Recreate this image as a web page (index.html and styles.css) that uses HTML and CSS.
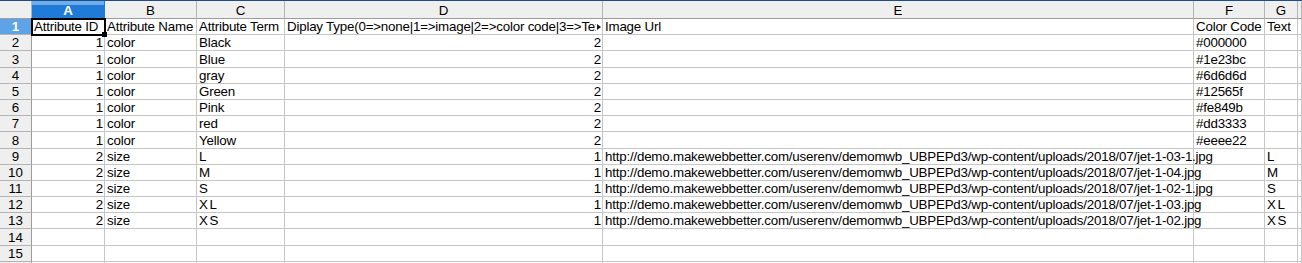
FILE: index.html
```html
<!DOCTYPE html>
<html lang="en">

<head>
    <meta charset="UTF-8">
    <meta name="viewport" content="width=device-width, initial-scale=1.0">
    <title>attributes.csv</title>
    <link rel="stylesheet" href="styles.css">
</head>

<body>

    <div class="sheet">
        <!-- column headers -->
        <div class="hd corner"></div>
        <div class="hd sel">A</div>
        <div class="hd">B</div>
        <div class="hd">C</div>
        <div class="hd">D</div>
        <div class="hd">E</div>
        <div class="hd">F</div>
        <div class="hd">G</div>
        <div class="hd"></div>

        <!-- row 1 -->
        <div class="rh sel">1</div>
        <div class="c active">Attribute ID</div>
        <div class="c">Attribute Name</div>
        <div class="c">Attribute Term</div>
        <div class="c clip"><span class="clip-text">Diplay Type(0=&gt;none|1=&gt;image|2=&gt;color code|3=&gt;Text)</span><span class="more"></span></div>
        <div class="c">Image Url</div>
        <div class="c">Color Code</div>
        <div class="c">Text</div>
        <div class="c"></div>

        <div class="rh">2</div>
        <div class="c num">1</div><div class="c">color</div><div class="c">Black</div><div class="c num">2</div><div class="c"></div><div class="c">#000000</div><div class="c"></div><div class="c"></div>
        <div class="rh">3</div>
        <div class="c num">1</div><div class="c">color</div><div class="c">Blue</div><div class="c num">2</div><div class="c"></div><div class="c">#1e23bc</div><div class="c"></div><div class="c"></div>
        <div class="rh">4</div>
        <div class="c num">1</div><div class="c">color</div><div class="c">gray</div><div class="c num">2</div><div class="c"></div><div class="c">#6d6d6d</div><div class="c"></div><div class="c"></div>
        <div class="rh">5</div>
        <div class="c num">1</div><div class="c">color</div><div class="c">Green</div><div class="c num">2</div><div class="c"></div><div class="c">#12565f</div><div class="c"></div><div class="c"></div>
        <div class="rh">6</div>
        <div class="c num">1</div><div class="c">color</div><div class="c">Pink</div><div class="c num">2</div><div class="c"></div><div class="c">#fe849b</div><div class="c"></div><div class="c"></div>
        <div class="rh">7</div>
        <div class="c num">1</div><div class="c">color</div><div class="c">red</div><div class="c num">2</div><div class="c"></div><div class="c">#dd3333</div><div class="c"></div><div class="c"></div>
        <div class="rh">8</div>
        <div class="c num">1</div><div class="c">color</div><div class="c">Yellow</div><div class="c num">2</div><div class="c"></div><div class="c">#eeee22</div><div class="c"></div><div class="c"></div>

        <div class="rh">9</div>
        <div class="c num">2</div><div class="c">size</div><div class="c">L</div><div class="c num">1</div><div class="c spill">http://demo.makewebbetter.com/userenv/demomwb_UBPEPd3/wp-content/uploads/2018/07/jet-1-03-1.jpg</div><div class="c"></div><div class="c">L</div><div class="c"></div>
        <div class="rh">10</div>
        <div class="c num">2</div><div class="c">size</div><div class="c">M</div><div class="c num">1</div><div class="c spill">http://demo.makewebbetter.com/userenv/demomwb_UBPEPd3/wp-content/uploads/2018/07/jet-1-04.jpg</div><div class="c"></div><div class="c">M</div><div class="c"></div>
        <div class="rh">11</div>
        <div class="c num">2</div><div class="c">size</div><div class="c">S</div><div class="c num">1</div><div class="c spill">http://demo.makewebbetter.com/userenv/demomwb_UBPEPd3/wp-content/uploads/2018/07/jet-1-02-1.jpg</div><div class="c"></div><div class="c">S</div><div class="c"></div>
        <div class="rh">12</div>
        <div class="c num">2</div><div class="c">size</div><div class="c wide">XL</div><div class="c num">1</div><div class="c spill">http://demo.makewebbetter.com/userenv/demomwb_UBPEPd3/wp-content/uploads/2018/07/jet-1-03.jpg</div><div class="c"></div><div class="c wide">XL</div><div class="c"></div>
        <div class="rh">13</div>
        <div class="c num">2</div><div class="c">size</div><div class="c wide">XS</div><div class="c num">1</div><div class="c spill">http://demo.makewebbetter.com/userenv/demomwb_UBPEPd3/wp-content/uploads/2018/07/jet-1-02.jpg</div><div class="c"></div><div class="c wide">XS</div><div class="c"></div>

        <div class="rh">14</div>
        <div class="c"></div><div class="c"></div><div class="c"></div><div class="c"></div><div class="c"></div><div class="c"></div><div class="c"></div><div class="c"></div>
        <div class="rh">15</div>
        <div class="c"></div><div class="c"></div><div class="c"></div><div class="c"></div><div class="c"></div><div class="c"></div><div class="c"></div><div class="c"></div>
        <div class="rh">16</div>
        <div class="c"></div><div class="c"></div><div class="c"></div><div class="c"></div><div class="c"></div><div class="c"></div><div class="c"></div><div class="c"></div>
    </div>

</body>

</html>
```

FILE: styles.css
```css
body {
    margin: 0;
    background: white;
    font-family: "Liberation Sans", Arial, sans-serif;
    font-size: 13.33px;
    color: #000;
    overflow: hidden;
}

.sheet {
    display: grid;
    grid-template-columns: 32px 73px 92px 88px 318px 591px 71px 33px 1fr;
    grid-template-rows: 18px;
    grid-auto-rows: 16.2px;
    border-top: 1px solid #1c4e8c;
}

.hd,
.rh,
.c {
    box-sizing: border-box;
    border-right: 1px solid #c6c6c6;
    border-bottom: 1px solid #c6c6c6;
    white-space: nowrap;
    line-height: 15px;
}

/* headers */
.hd {
    background: #efefef;
    border-right-color: #b4b4b4;
    border-bottom-color: #9c9c9c;
    display: flex;
    align-items: center;
    justify-content: center;
    padding-top: 1px;
}

.rh {
    background: #efefef;
    border-right-color: #9c9c9c;
    border-bottom-color: #b4b4b4;
    display: flex;
    align-items: flex-end;
    justify-content: center;
}

.hd.sel {
    background: linear-gradient(#6fadea 0, #6fadea 4px, #1f7bd6 4px);
    color: white;
    font-weight: bold;
    border-right-color: #1f7bd6;
}

.rh.sel {
    background: #5ea3e8;
    color: white;
    font-weight: bold;
}

/* cells */
.c {
    display: flex;
    align-items: flex-end;
    padding: 0 1px 0 2px;
    overflow: hidden;
    letter-spacing: -0.2px;
}

.c.num {
    justify-content: flex-end;
}

.c.wide {
    letter-spacing: 1.5px;
}

.c.spill {
    overflow: visible;
    position: relative;
    z-index: 1;
}

.c.clip {
    padding-right: 1px;
}

.clip-text {
    flex: 1;
    overflow: hidden;
}

.more {
    width: 0;
    height: 0;
    margin: 0 0 4px 1px;
    border-top: 3px solid transparent;
    border-bottom: 3px solid transparent;
    border-left: 4px solid #1a1a1a;
}

.c.active {
    overflow: visible;
    position: relative;
    outline: 2px solid #000;
    outline-offset: -1px;
    z-index: 2;
}

.c.active::after {
    content: "";
    position: absolute;
    right: -3px;
    bottom: -3px;
    width: 5px;
    height: 5px;
    background: #000;
}
```
